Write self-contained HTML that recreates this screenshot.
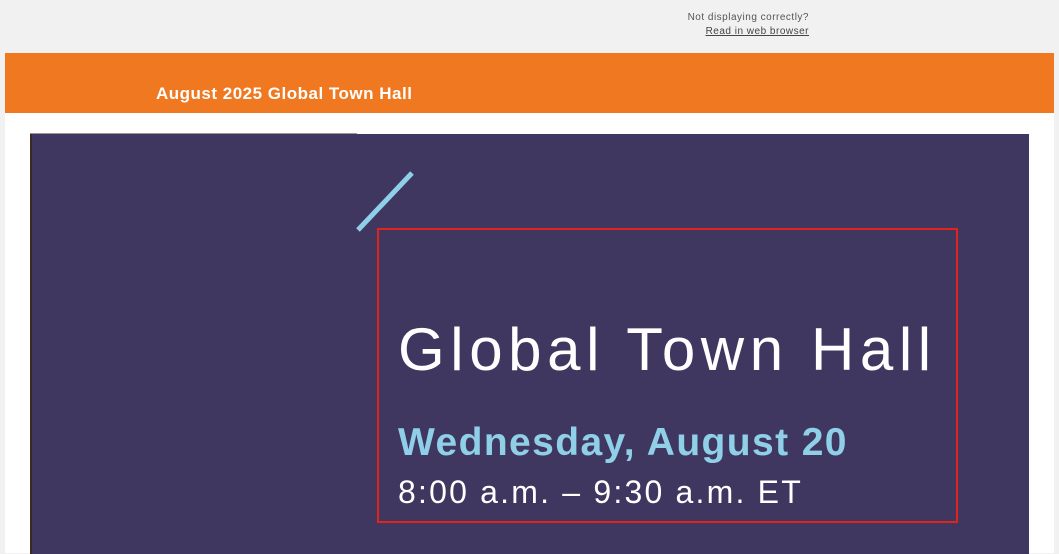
<!DOCTYPE html>
<html><head><style>
body{margin:0;background:#f1f1f1;font-family:"Liberation Sans",Arial,sans-serif;width:1059px;height:543px;overflow:hidden;position:relative}
.t{position:absolute;right:250px;text-align:right;font-size:10px;color:#555;top:11px;line-height:14px;letter-spacing:0.5px}
.t a{color:#444;text-decoration:underline}
.wrap{position:absolute;left:5px;top:53px;width:1049px;height:500px;background:#fff}
.hdr{height:60px;background:#f07820;position:relative}
.hdr div{position:absolute;left:151px;top:31px;color:#fff;font-weight:bold;font-size:17px;letter-spacing:0.5px}
.ban{position:absolute;left:30px;top:134px;width:997px;height:420px;background:#3f3760;border-left:2px solid #3a2a20}
.box{position:absolute;left:377px;top:228px;width:577px;height:291px;border:2px solid #e2231a}
.g{position:absolute;left:398px;top:312px;color:#fff;font-size:60px;letter-spacing:5.6px;white-space:nowrap;line-height:76px}
.w{position:absolute;left:398px;top:419px;color:#8fd0e8;font-size:39px;font-weight:bold;letter-spacing:1.4px;white-space:nowrap;line-height:48px}
.tm{position:absolute;left:398px;top:472px;color:#fff;font-size:32px;letter-spacing:2.2px;white-space:nowrap;line-height:40px}
</style></head><body>
<div class="t">Not displaying correctly?<br><a>Read in web browser</a></div>
<div class="wrap"><div class="hdr"><div>August 2025 Global Town Hall</div></div></div>
<div class="ban"></div>
<div style="position:absolute;left:30px;top:133px;width:327px;height:1px;background:#999"></div>
<svg style="position:absolute;left:0;top:0" width="1059" height="543"><line x1="358" y1="230" x2="412" y2="173" stroke="#8fd0e8" stroke-width="5"/></svg>
<div class="box"></div>
<div class="g">Global Town Hall</div>
<div class="w">Wednesday, August 20</div>
<div class="tm">8:00 a.m. – 9:30 a.m. ET</div>
</body></html>
